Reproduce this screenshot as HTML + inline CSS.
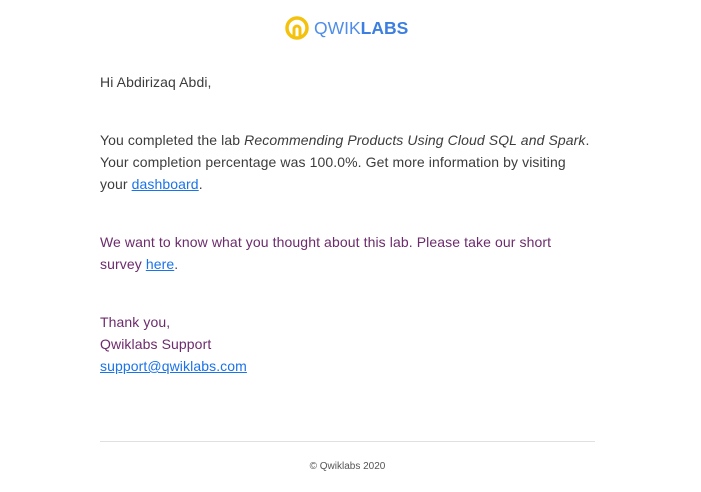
<!DOCTYPE html>
<html><head><meta charset="utf-8"><style>
body{margin:0;background:#fff;font-family:"Liberation Sans",Arial,sans-serif;width:701px;height:492px;overflow:hidden;position:relative}
.p{position:absolute;left:100px;font-size:14px;line-height:22px;color:#3c3c3c;width:500px;letter-spacing:0.1px}
a{color:#1a73e8;text-decoration:underline}
.pu{color:#6c2b6c}
</style></head><body>
<div style="position:absolute;left:285px;top:15px;height:26px;display:flex;align-items:center">
<svg width="24" height="24" viewBox="0 0 24 24"><circle cx="12" cy="12" r="10" fill="none" stroke="#f4c20d" stroke-width="3.5"/><path d="M9 20 V13 a3 3 0 0 1 6 0 V20" fill="none" stroke="#f4c20d" stroke-width="3"/></svg>
<span style="margin-left:5px;font-size:17.5px;color:#4f8ee8">QWIK</span><span style="font-size:17.5px;font-weight:bold;color:#3d7fe0">LABS</span>
</div>
<div class="p" style="top:71px">Hi Abdirizaq Abdi,</div>
<div class="p" style="top:129px">You completed the lab <i>Recommending Products Using Cloud SQL and Spark</i>.<br>Your completion percentage was 100.0%. Get more information by visiting<br>your <a>dashboard</a>.</div>
<div class="p pu" style="top:231px">We want to know what you thought about this lab. Please take our short<br>survey <a>here</a>.</div>
<div class="p pu" style="top:311px">Thank you,<br>Qwiklabs Support<br><a>support@qwiklabs.com</a></div>
<div style="position:absolute;left:100px;top:441px;width:495px;border-top:1px solid #e0e0e0"></div>
<div style="position:absolute;left:0;width:695px;top:461px;text-align:center;font-size:10px;color:#555">© Qwiklabs 2020</div>
</body></html>
